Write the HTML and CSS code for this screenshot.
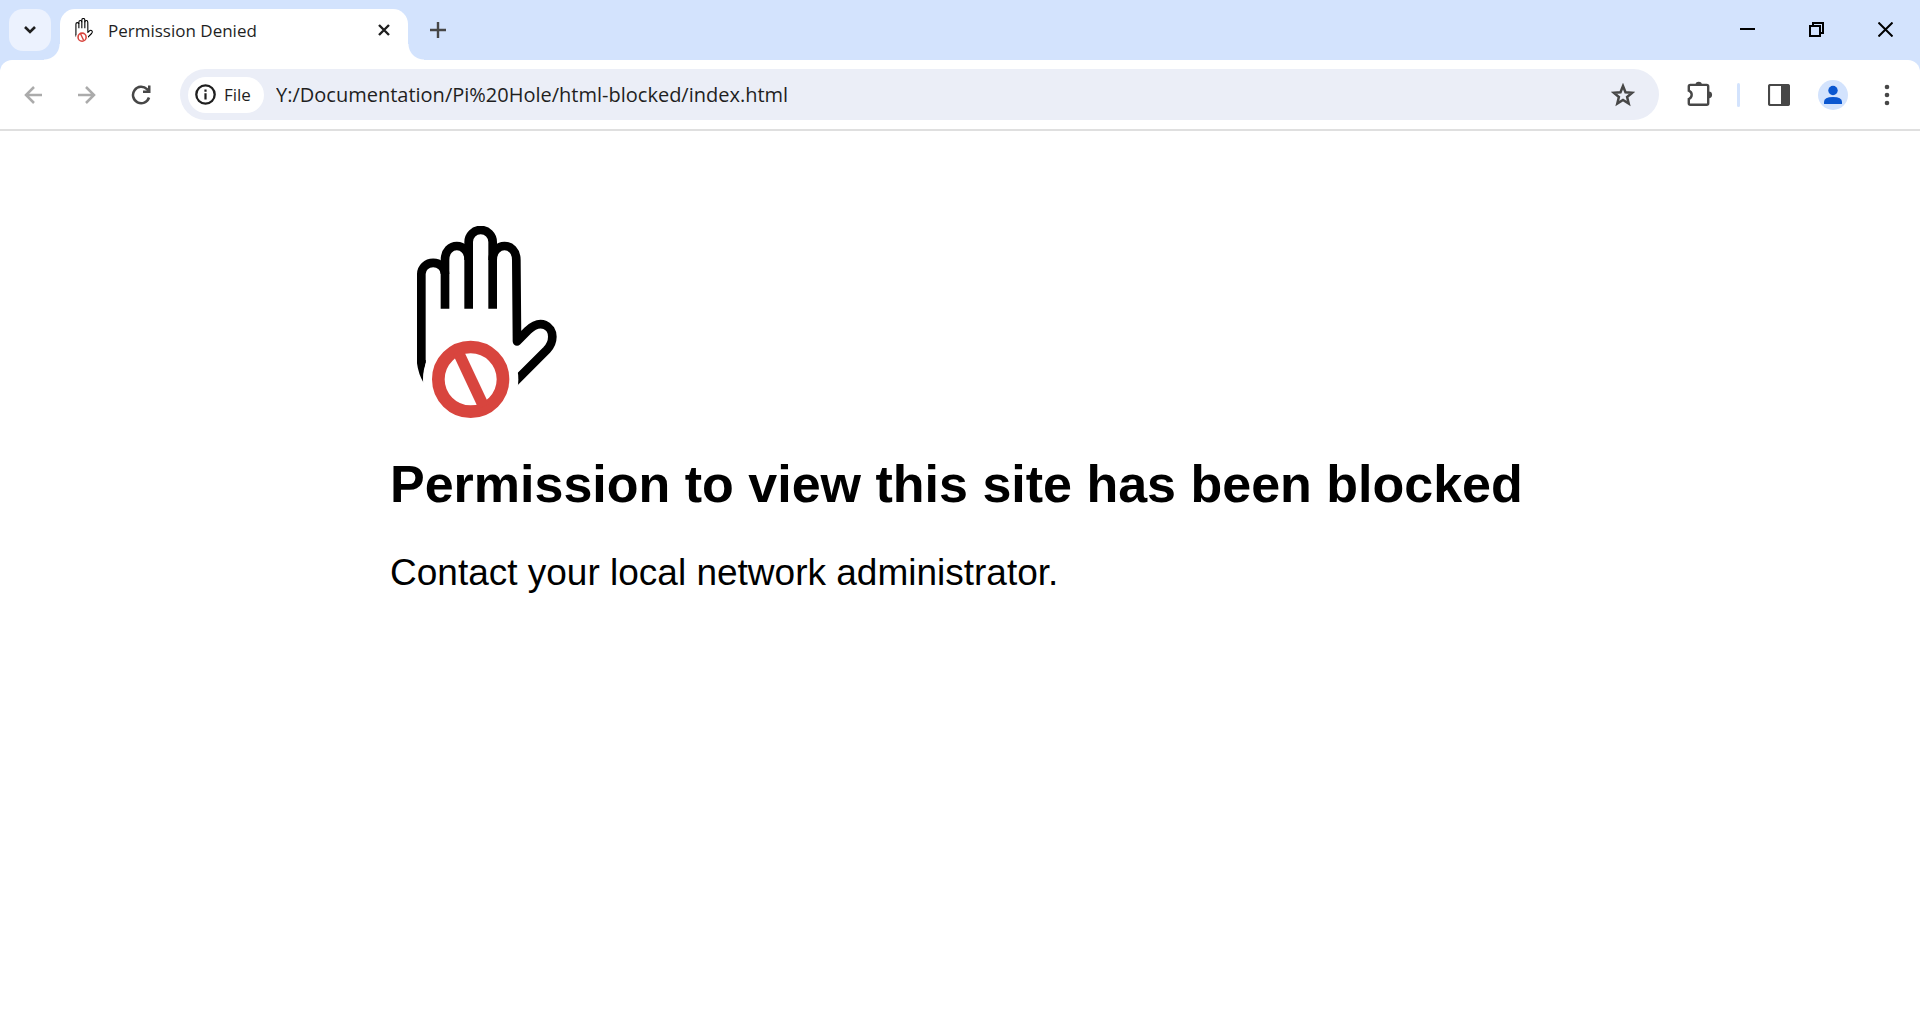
FILE: index.html
```html
<!DOCTYPE html>
<html lang="en">
<head>
<meta charset="utf-8">
<title>Permission Denied</title>
<link rel="stylesheet" href="styles.css">
</head>
<body>
<svg class="symbols" aria-hidden="true">
  <symbol id="hand" viewBox="0 78 576 576">
    <path d="M81 480V490Q85 522 101 549Q99 520 107 490V480z"/>
    <g fill="none" stroke="#000" stroke-width="26">
      <path d="M94 488V222A35 33 0 0 1 165 222"/>
      <path d="M165 326V180C165 124 236 124 236 180"/>
      <path d="M236 326V126A36 36 0 0 1 308 126V326"/>
      <path d="M308 180C308 124 379 124 379 180L381 424L413 392C453 354 487 379 487 410Q487 432 470 450L360 560" stroke-linejoin="round"/>
    </g>
    <circle cx="242" cy="538" r="143" fill="#fff"/>
    <g fill="none" stroke="#d8453e">
      <circle cx="242" cy="538" r="97" stroke-width="38"/>
      <path d="M205 457L281 619" stroke-width="34"/>
    </g>
  </symbol>
</svg>

<header class="chrome">
  <div class="tabstrip">
    <button class="tab-search" aria-label="Search tabs">
      <svg width="14" height="10" viewBox="0 0 14 10"><path d="M2 2l5 5 5-5" fill="none" stroke="#1f1f1f" stroke-width="2.6"/></svg>
    </button>
    <div class="tab">
      <svg class="favicon" width="24" height="24"><use href="#hand"/></svg>
      <span class="tab-title">Permission Denied</span>
      <button class="tab-close" aria-label="Close tab">
        <svg width="12" height="12" viewBox="0 0 12 12"><path d="M1 1l10 10M11 1L1 11" stroke="#1f1f1f" stroke-width="2.4"/></svg>
      </button>
    </div>
    <button class="new-tab" aria-label="New tab">
      <svg width="16" height="16" viewBox="0 0 16 16"><path d="M8 0v16M0 8h16" stroke="#474747" stroke-width="2.4"/></svg>
    </button>
    <div class="window-controls">
      <button aria-label="Minimize"><svg width="15" height="15" viewBox="0 0 15 15"><path d="M0 7h15" stroke="#000" stroke-width="2"/></svg></button>
      <button aria-label="Restore"><svg width="15" height="15" viewBox="0 0 15 15"><path d="M1 4h10v10H1zM4 4V1h10v10h-3" fill="none" stroke="#000" stroke-width="2"/></svg></button>
      <button aria-label="Close"><svg width="15" height="15" viewBox="0 0 15 15"><path d="M.5 .5l14 14M14.500 .5l-14 14" stroke="#000" stroke-width="2"/></svg></button>
    </div>
  </div>

  <div class="toolbar">
    <button class="tool" aria-label="Back"><svg width="18" height="18" viewBox="0 0 18 18"><path d="M18 9H2M10 1L2 9l8 8" fill="none" stroke="#ababab" stroke-width="2.5"/></svg></button>
    <button class="tool" aria-label="Forward"><svg width="18" height="18" viewBox="0 0 18 18"><path d="M0 9h16M8 1l8 8-8 8" fill="none" stroke="#ababab" stroke-width="2.5"/></svg></button>
    <button class="tool" aria-label="Reload"><svg width="20" height="20" viewBox="0 0 20 20"><path d="M18 12.500A8.200 8.200 0 1 1 16 4.200L18 6.500" fill="none" stroke="#474747" stroke-width="2.500"/><path d="M19.500 .5V8H12V5.500h5V.5z" fill="#474747"/></svg></button>
    <div class="omnibox">
      <button class="chip">
        <svg width="21" height="21" viewBox="0 0 21 21"><circle cx="10.500" cy="10.500" r="9.200" fill="none" stroke="#1f1f1f" stroke-width="2.300"/><path d="M10.500 9.200v6.300M10.500 5.500v2.300" stroke="#1f1f1f" stroke-width="2.200"/></svg>
        <span>File</span>
      </button>
      <input class="url" type="text" aria-label="Address" value="Y:/Documentation/Pi%20Hole/html-blocked/index.html">
      <button class="star" aria-label="Bookmark this page"><svg width="24" height="24" viewBox="0 0 24 24"><path d="M12 3l2.500 6.200 6.700.5-5.100 4.300 1.600 6.500L12 17l-5.700 3.500L7.900 14 2.800 9.700l6.700-.5z" fill="none" stroke="#474747" stroke-width="2.500"/></svg></button>
    </div>
    <button class="tool" aria-label="Extensions"><svg class="puzzle" width="26" height="26" viewBox="0 0 26 26"><path d="M4.300 2.900h16.400q1.500 0 1.500 1.500v16.800q0 1.500-1.500 1.500H4.300q-1.500 0-1.500-1.500V17q2.900-1.200 2.900-4.200T2.800 8.600V4.400q0-1.500 1.500-1.500z" fill="none" stroke="#474747" stroke-width="2.400"/><path d="M9.500 2.900a3.200 3.200 0 0 1 6.400 0zM22.700 9.400a3.400 3.400 0 0 1 0 6.800z" fill="#474747"/></svg></button>
    <span class="divider"></span>
    <button class="tool" aria-label="Side panel"><svg width="22" height="22" viewBox="0 0 22 22"><rect x="1" y="1" width="20" height="20" rx="1.500" fill="none" stroke="#474747" stroke-width="2.200"/><path d="M13 1h8v20h-8z" fill="#474747"/></svg></button>
    <button class="tool" aria-label="Profile"><svg width="30" height="30" viewBox="0 0 30 30"><circle cx="15" cy="15" r="15" fill="#d3e3fd"/><circle cx="15" cy="10.500" r="4.700" fill="#0b57d0"/><path d="M6 24v-2q0-5 9-5t9 5v2z" fill="#0b57d0"/></svg></button>
    <button class="tool" aria-label="Menu"><svg width="6" height="22" viewBox="0 0 6 22"><g fill="#474747"><circle cx="3" cy="3" r="2.300"/><circle cx="3" cy="11" r="2.300"/><circle cx="3" cy="19" r="2.300"/></g></svg></button>
  </div>
</header>

<main class="page">
  <div class="message">
    <svg class="hand" width="192" height="192" role="img" aria-label="Blocked"><use href="#hand"/></svg>
    <h1>Permission to view this site has been blocked</h1>
    <p>Contact your local network administrator.</p>
  </div>
</main>
</body>
</html>
```
FILE: styles.css
```css
* { box-sizing: border-box; }

body {
  margin: 0;
  background: #fff;
  color: #000;
  font-family: "Liberation Sans", Arial, sans-serif;
}

.symbols { position: absolute; width: 0; height: 0; }

svg { display: block; }

button {
  display: flex;
  align-items: center;
  justify-content: center;
  padding: 0;
  border: 0;
  background: none;
  color: inherit;
  font: inherit;
}

.chrome {
  background: #d3e3fd;
  color: #1f1f1f;
  font-family: "Open Sans", "Noto Sans", sans-serif;
}

.tabstrip {
  display: flex;
  align-items: flex-end;
  height: 60px;
  padding-left: 9px;
}

.tab-search {
  width: 42px;
  height: 42px;
  margin: 0 9px 9px 0;
  border-radius: 14px;
  background: #ecf2fe;
}

.tab {
  position: relative;
  display: flex;
  align-items: center;
  width: 348px;
  height: 51px;
  padding: 0 16px 9px 12px;
  border-radius: 15px 15px 0 0;
  background: #fff;
}

.tab::before,
.tab::after {
  content: "";
  position: absolute;
  bottom: 0;
  width: 16px;
  height: 16px;
}

.tab::before {
  right: 100%;
  background: radial-gradient(circle at 0 0, transparent 15px, #fff 16px);
}

.tab::after {
  left: 100%;
  background: radial-gradient(circle at 100% 0, transparent 15px, #fff 16px);
}

.tab-title {
  flex: 1;
  margin-left: 12px;
  padding-top: 2px;
  font-size: 17px;
  line-height: 24px;
}

.tab-close { width: 16px; height: 24px; }

.new-tab {
  width: 42px;
  height: 42px;
  margin: 0 0 9px 9px;
}

.window-controls {
  display: flex;
  align-self: stretch;
  margin-left: auto;
}

.window-controls button { width: 69px; height: 59px; }

.toolbar {
  display: flex;
  align-items: center;
  height: 71px;
  padding: 0 6px;
  border-bottom: 2px solid #dfdfdf;
  border-radius: 12px 12px 0 0;
  background: #fff;
}

.tool { flex: none; width: 54px; height: 48px; }

.puzzle { overflow: visible; }

.omnibox {
  display: flex;
  flex: 1;
  align-items: center;
  height: 51px;
  margin: 0 13px 0 12px;
  padding: 0 15px 0 8px;
  border-radius: 26px;
  background: #ebeef7;
}

.chip {
  justify-content: flex-start;
  gap: 8px;
  width: 76px;
  height: 36px;
  padding-left: 7px;
  border-radius: 18px;
  background: #fff;
  font-size: 17px;
  font-weight: 500;
}

.url {
  flex: 1;
  min-width: 0;
  margin-left: 12px;
  padding: 0;
  border: 0;
  outline: 0;
  background: none;
  color: inherit;
  font: 20px/28px "Open Sans", "Noto Sans", sans-serif;
}

.star { width: 42px; height: 42px; }

.divider {
  width: 3px;
  height: 24px;
  margin: 0 12px 0 11px;
  border-radius: 2px;
  background: #d3e3fd;
}

.page { padding: 95px 24px 24px; }

.message {
  max-width: 1140px;
  margin: 0 auto;
}

h1 {
  margin: 36px 0 0;
  font-size: 52px;
  line-height: 60px;
}

p {
  margin: 36px 0 0;
  font-size: 37px;
  line-height: 46px;
}
```
